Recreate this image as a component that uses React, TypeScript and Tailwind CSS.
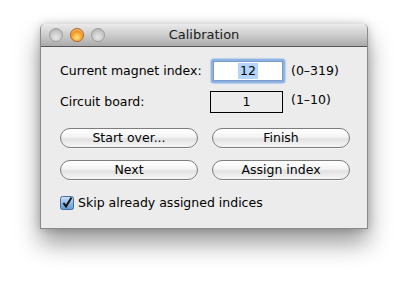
import React from "react";

const font = { fontFamily: '"DejaVu Sans", "Liberation Sans", sans-serif' };

const Light = ({ color }: { color: "gray" | "orange" }) => (
  <div
    className={
      color === "orange"
        ? "w-[14px] h-[14px] rounded-full border border-[#b4631c] bg-[radial-gradient(circle_at_50%_70%,#ffe38a_0%,#f7a72c_45%,#d8690f_100%)] shadow-[inset_0_1px_1px_rgba(255,255,255,0.6)]"
        : "w-[14px] h-[14px] rounded-full border border-[#9c9c9c] bg-[radial-gradient(circle_at_50%_70%,#e6e6e6_0%,#c9c9c9_55%,#a9a9a9_100%)]"
    }
  />
);

const Button = ({ label }: { label: string }) => (
  <button className="w-[138px] h-[20px] rounded-full border border-[#7d7d7d] bg-[linear-gradient(#ffffff_0%,#f4f4f4_45%,#e2e2e2_55%,#f6f6f6_100%)] text-[12.5px] text-black leading-none shadow-[0_1px_0_rgba(255,255,255,0.6)]">
    {label}
  </button>
);

export default function App() {
  return (
    <div className="w-[408px] h-[284px] bg-white pt-[24px] pl-[40px]" style={font}>
      <div className="w-[328px] h-[205px] bg-[#ececec] rounded-t-[5px] border border-[#8a8a8a] border-t-0 shadow-[0_14px_24px_rgba(0,0,0,0.4),0_0_8px_rgba(0,0,0,0.2)] flex flex-col">
        {/* title bar */}
        <div className="relative h-[23px] rounded-t-[5px] bg-[linear-gradient(#ebebeb,#c6c6c6_60%,#aaaaaa)] border-b border-[#585858] flex items-center pl-[8px] gap-[7px]">
          <Light color="gray" />
          <Light color="orange" />
          <Light color="gray" />
          <div className="absolute inset-0 flex items-center justify-center text-[13px] text-[#1a1a1a]">
            Calibration
          </div>
        </div>

        <div className="flex flex-col pl-[19px] pt-[12px] text-[12.5px] text-black">
          <div className="flex items-center h-[24px]">
            <span className="w-[151px]">Current magnet index:</span>
            <div className="w-[74px] h-[24px] rounded-[3px] p-[2px] bg-[#8db2e6] shadow-[0_0_2px_#5b8fd6]">
              <div className="w-full h-full bg-white border border-[#7a9bc8] flex items-center justify-center">
                <span className="bg-[#b5d5ff] px-[2px] leading-[16px]">12</span>
              </div>
            </div>
            <span className="ml-[6px]">(0–319)</span>
          </div>

          <div className="flex items-center h-[22px] mt-[8px]">
            <span className="w-[150px]">Circuit board:</span>
            <div className="w-[73px] h-[22px] border border-black flex items-center justify-center">
              1
            </div>
            <span className="ml-[8px] -mt-[4px]">(1–10)</span>
          </div>

          <div className="flex gap-[14px] mt-[15px]">
            <Button label="Start over..." />
            <Button label="Finish" />
          </div>
          <div className="flex gap-[14px] mt-[12px]">
            <Button label="Next" />
            <Button label="Assign index" />
          </div>

          <div className="flex items-center mt-[14px] gap-[4px]">
            <svg width="14" height="14" viewBox="0 0 14 14">
              <defs>
                <linearGradient id="cb" x1="0" y1="0" x2="0" y2="1">
                  <stop offset="0" stopColor="#cfe3f7" />
                  <stop offset="0.5" stopColor="#8fb9e6" />
                  <stop offset="1" stopColor="#5e9ad8" />
                </linearGradient>
              </defs>
              <rect x="0.5" y="0.5" width="13" height="13" rx="2" fill="url(#cb)" stroke="#4a6f9c" />
              <path d="M3.5 7 L6 10.5 L11.5 1.5" fill="none" stroke="#111" strokeWidth="2" />
            </svg>
            <span>Skip already assigned indices</span>
          </div>
        </div>
      </div>
    </div>
  );
}
